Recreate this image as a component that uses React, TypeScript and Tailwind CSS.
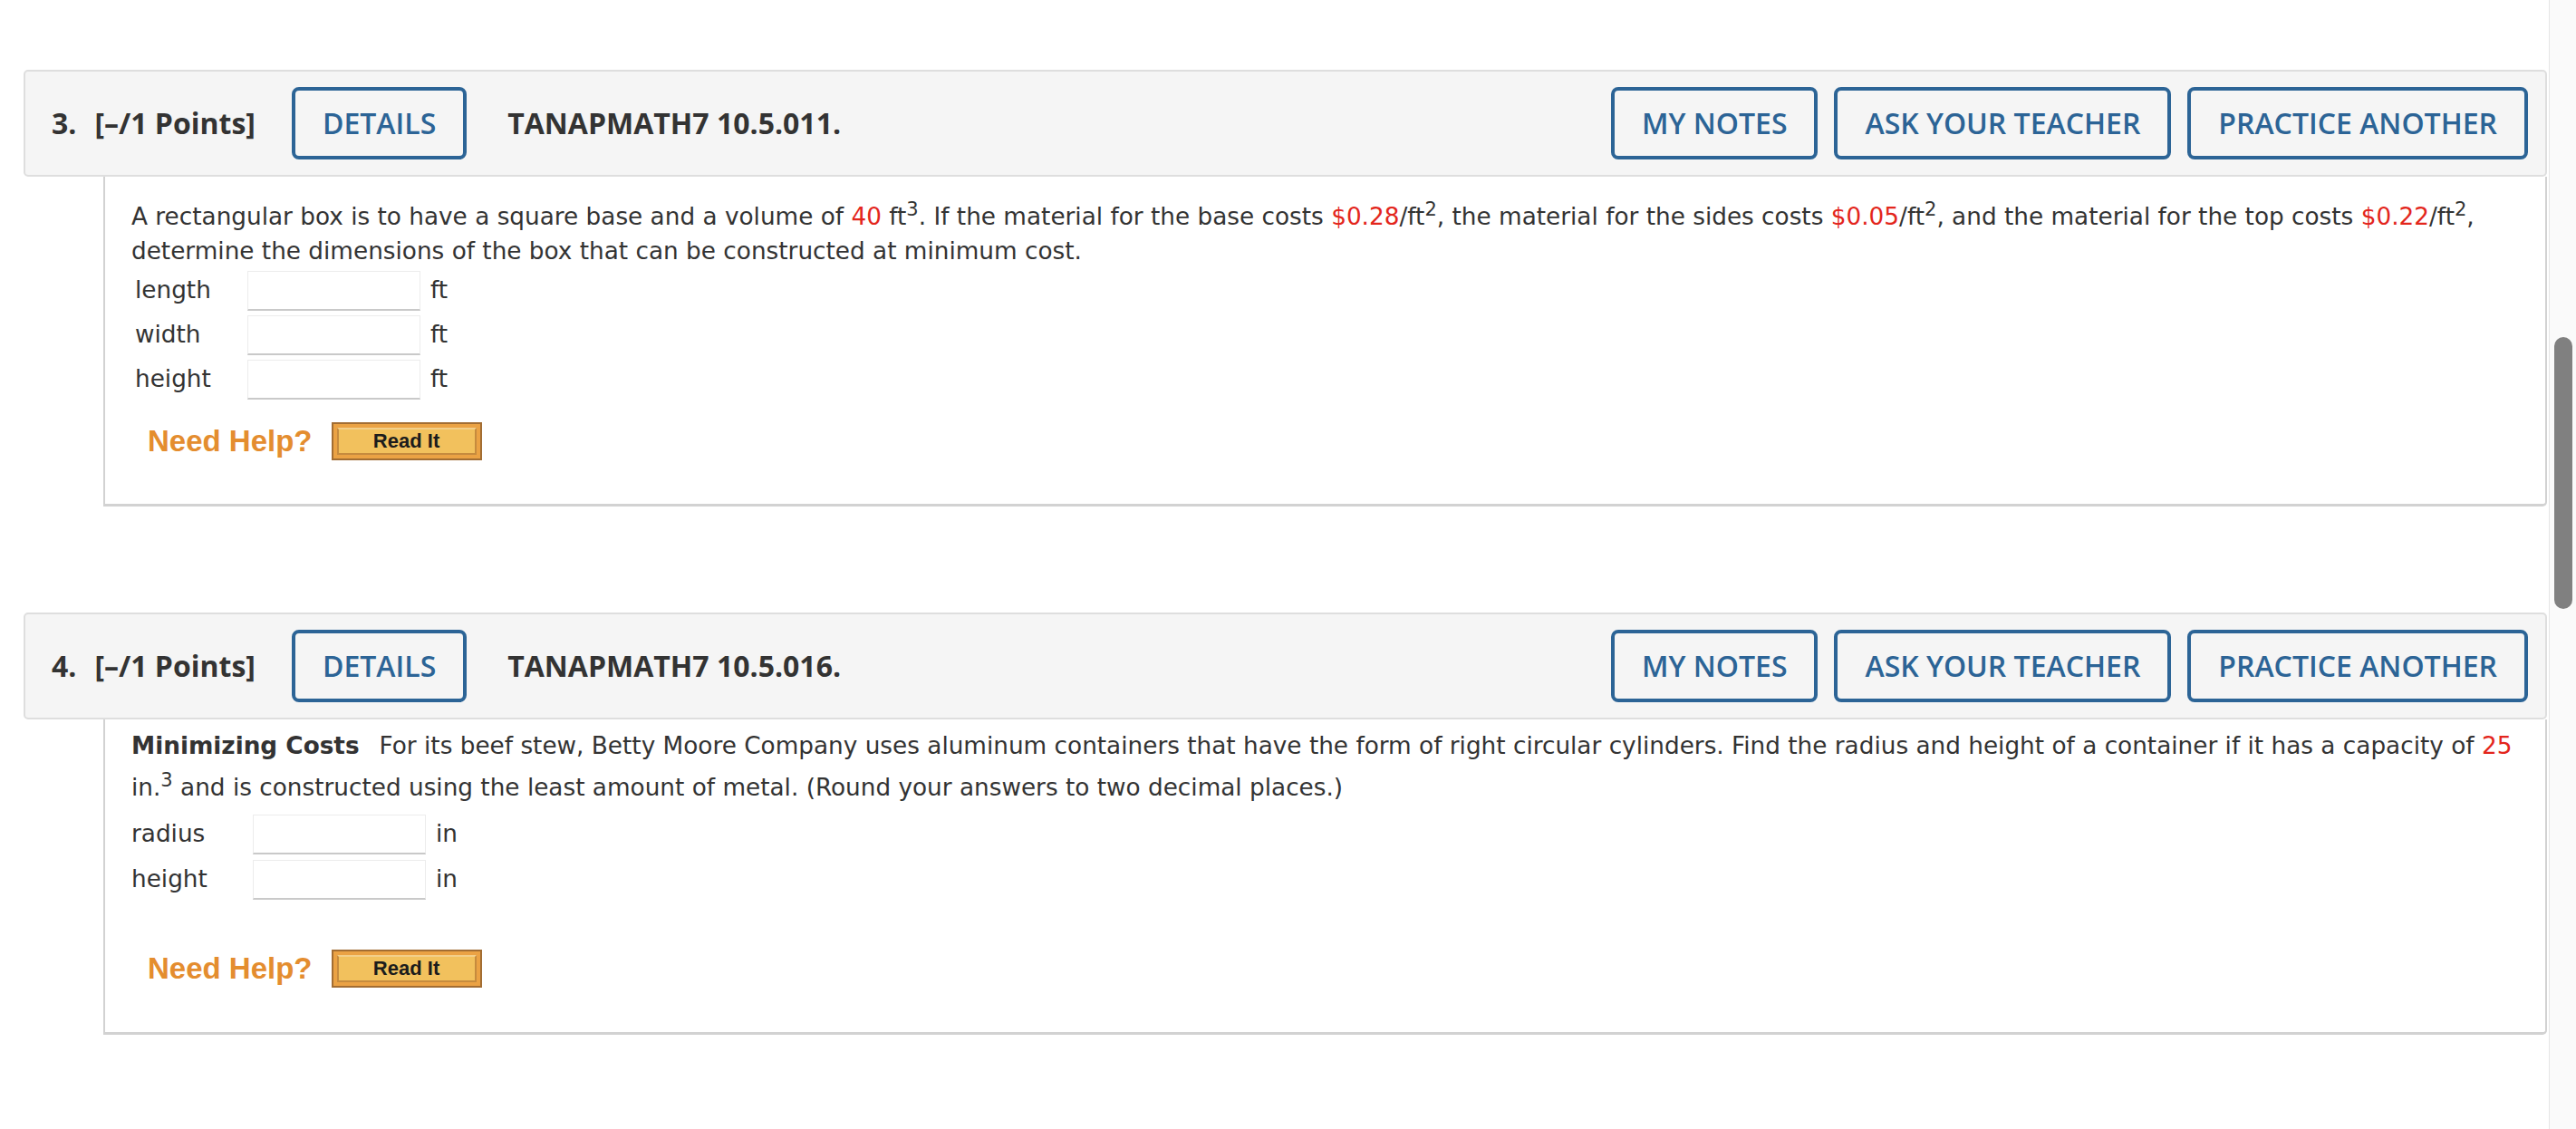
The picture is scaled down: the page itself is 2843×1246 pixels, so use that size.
import React from 'react';

const red = 'text-[#e3261c]';

function Sup({ children }: { children: React.ReactNode }) {
  return <sup className="static align-super text-[21px] leading-[38px]">{children}</sup>;
}

function Red({ children }: { children: React.ReactNode }) {
  return <span className={red}>{children}</span>;
}

function HeaderButton({ label }: { label: string }) {
  return (
    <button className="h-[80px] px-[30px] border-4 border-[#2c6496] rounded-[8px] text-[#2c6496] text-[32px] font-semibold whitespace-nowrap">
      {label}
    </button>
  );
}

function QuestionHeader({ num, code }: { num: string; code: string }) {
  return (
    <div className="ml-[26px] mr-[2px] border-2 border-[#dedede] rounded-[5px] bg-[#f5f5f5] py-[17px] pl-[29px] pr-[19px] flex items-center text-[#333] font-['Open_Sans',sans-serif]">
      <span className="text-[32px] font-bold">{num}.</span>
      <span className="ml-[20px] text-[32px] font-bold">[–/1 Points]</span>
      <div className="ml-[40px]">
        <HeaderButton label="DETAILS" />
      </div>
      <span className="ml-[45px] text-[32px] font-bold">{code}</span>
      <div className="ml-auto flex gap-[18px]">
        <HeaderButton label="MY NOTES" />
        <HeaderButton label="ASK YOUR TEACHER" />
        <HeaderButton label="PRACTICE ANOTHER" />
      </div>
    </div>
  );
}

function AnswerBox() {
  return (
    <div className="w-[191px] h-[44px] bg-white border border-[#ececec] border-b-2 border-b-[#c9c9c9]" />
  );
}

function NeedHelp() {
  return (
    <div className="flex items-center ml-[18px] leading-none">
      <span className="font-['Liberation_Sans',Arial,sans-serif] font-bold text-[33px] text-[#e48d2f]">
        Need Help?
      </span>
      <div className="ml-[21px] w-[166px] h-[42px] border-2 border-[#a26d33] bg-[#eba244] p-[4px]">
        <div className="h-full border-2 border-[#c68b3e] border-t-[#f3cf8a] bg-[#f2c15d] flex items-center justify-center font-['Liberation_Sans',Arial,sans-serif] font-bold text-[22px] text-[#1c1c1c]">
          Read It
        </div>
      </div>
    </div>
  );
}

export default function App() {
  return (
    <div className="min-h-screen bg-white flex">
      <div className="flex-1 pt-[77px] font-['DejaVu_Sans',Verdana,sans-serif] text-[#333]">
        {/* question 3 */}
        <QuestionHeader num="3" code="TANAPMATH7 10.5.011." />
        <div className="ml-[114px] mr-[2px] border-x-2 border-b-[3px] border-[#d2d2d2] rounded-br-[5px] pl-[29px] pr-[22px] pt-[17px] pb-[48px]">
          <p className="text-[26.3px] leading-[38px]">
            A rectangular box is to have a square base and a volume of <Red>40</Red> ft<Sup>3</Sup>. If the
            material for the base costs <Red>$0.28</Red>/ft<Sup>2</Sup>, the material for the sides costs{' '}
            <Red>$0.05</Red>/ft<Sup>2</Sup>, and the material for the top costs <Red>$0.22</Red>/ft<Sup>2</Sup>,
            determine the dimensions of the box that can be constructed at minimum cost.
          </p>
          <div className="mt-[3px] ml-[4px] grid grid-cols-[124px_191px_auto] items-center gap-y-[5px] text-[26.3px]">
            <span>length</span>
            <AnswerBox />
            <span className="pl-[11px]">ft</span>
            <span>width</span>
            <AnswerBox />
            <span className="pl-[11px]">ft</span>
            <span>height</span>
            <AnswerBox />
            <span className="pl-[11px]">ft</span>
          </div>
          <div className="mt-[25px]">
            <NeedHelp />
          </div>
        </div>

        {/* question 4 */}
        <div className="mt-[117px]">
          <QuestionHeader num="4" code="TANAPMATH7 10.5.016." />
        </div>
        <div className="ml-[114px] mr-[2px] border-x-2 border-b-[3px] border-[#d2d2d2] rounded-br-[5px] pl-[29px] pr-[22px] pt-[10px] pb-[49px]">
          <p className="text-[26.3px] leading-[38px]">
            <span className="font-bold mr-[22px]">Minimizing Costs</span>
            For its beef stew, Betty Moore Company uses aluminum containers that have the form of right circular
            cylinders. Find the radius and height of a container if it has a capacity of <Red>25</Red> in.
            <Sup>3</Sup> and is constructed using the least amount of metal. (Round your answers to two decimal
            places.)
          </p>
          <div className="mt-[11px] grid grid-cols-[134px_191px_auto] items-center gap-y-[6px] text-[26.3px]">
            <span>radius</span>
            <AnswerBox />
            <span className="pl-[11px]">in</span>
            <span>height</span>
            <AnswerBox />
            <span className="pl-[11px]">in</span>
          </div>
          <div className="mt-[55px]">
            <NeedHelp />
          </div>
        </div>
      </div>

      {/* scrollbar */}
      <div className="w-[30px] shrink-0 bg-[#fafafa] border-l border-[#e6e6e6] pt-[372px]">
        <div className="ml-[5px] w-[20px] h-[300px] rounded-full bg-[#808080]" />
      </div>
    </div>
  );
}
